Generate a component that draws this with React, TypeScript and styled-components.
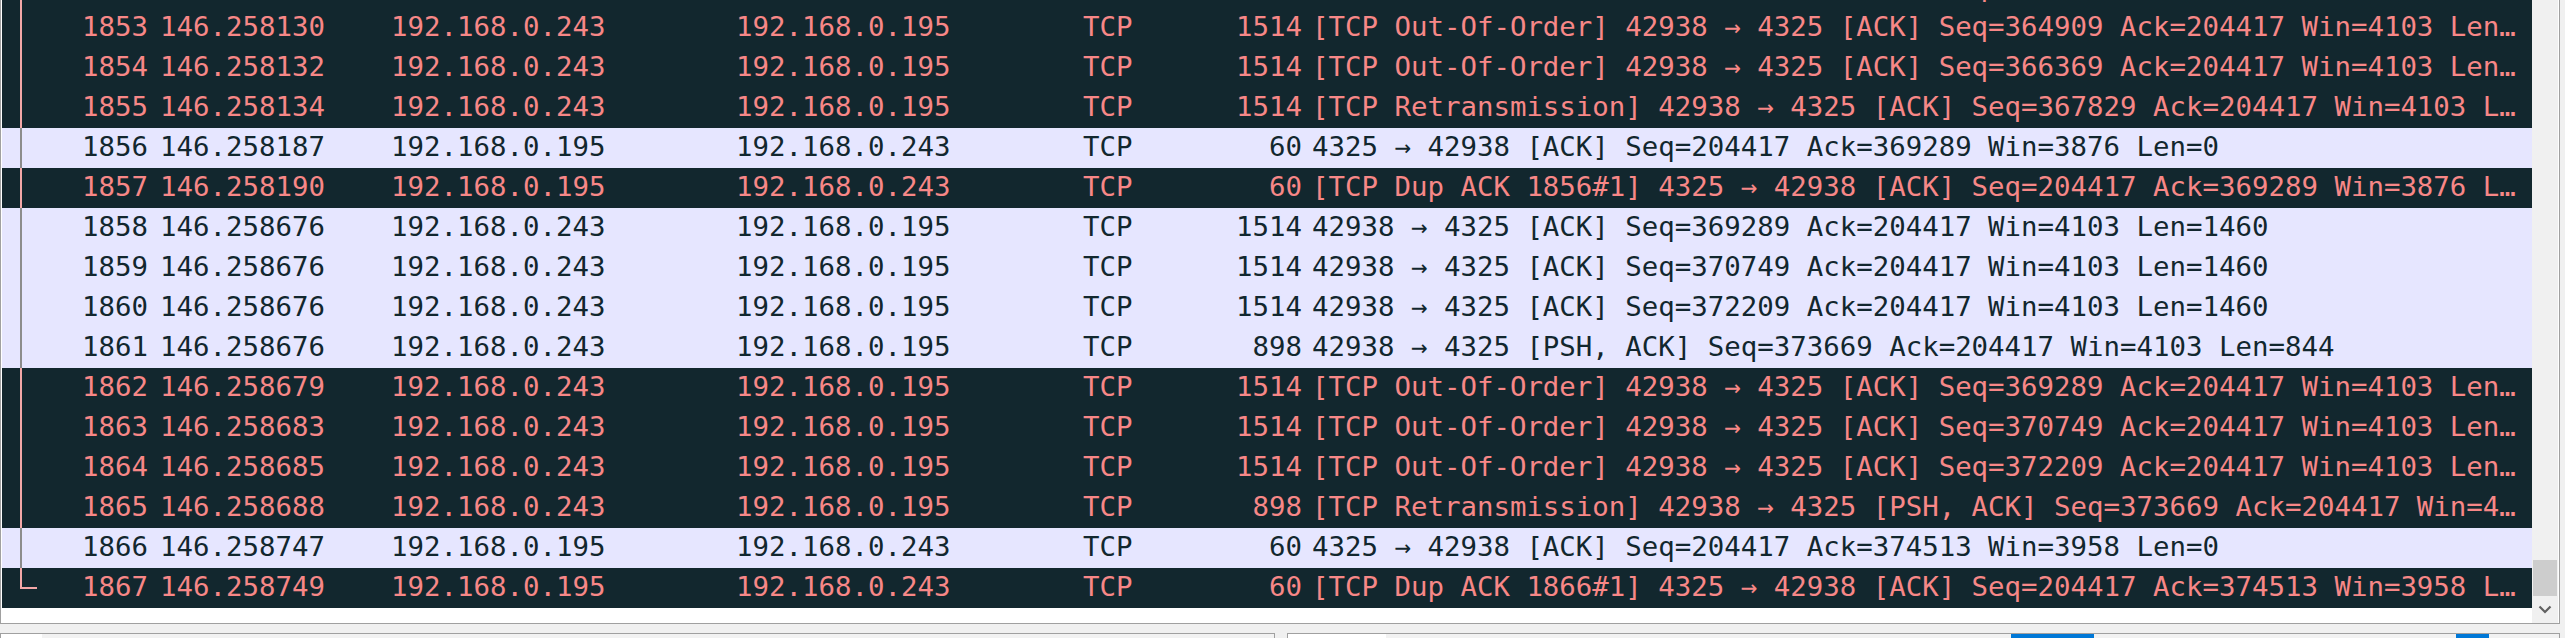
import React from 'react';
import styled, { createGlobalStyle, css } from 'styled-components';

const GlobalStyle = createGlobalStyle`
  html, body {
    margin: 0;
    padding: 0;
    background: #f0f0f0;
    overflow: hidden;
  }
  #root {
    width: 2565px;
    height: 638px;
  }
`;

const MONO = `"DejaVu Sans Mono", "Liberation Mono", monospace`;

const Window = styled.div`
  display: flex;
  flex-direction: column;
  width: 2565px;
  height: 638px;
  overflow: hidden;
  background: #f0f0f0;
  font-family: ${MONO};
  font-size: 27.4px;
`;

const ListPanel = styled.div`
  flex: none;
  display: flex;
  width: 2560px;
  height: 624px;
  box-sizing: border-box;
  border: 1px solid #a0a0a0;
  border-top: none;
  padding: 0 1px;
  background: #ffffff;
`;

const Viewport = styled.div`
  flex: 1;
  min-width: 0;
  overflow: hidden;
`;

const PacketList = styled.div<{ $scroll: number }>`
  display: flex;
  flex-direction: column;
  margin-top: ${(p) => -p.$scroll}px;
`;

const Row = styled.div<{ $bad: boolean }>`
  display: grid;
  grid-template-columns: 40px 110px 231px 345px 347px 75px 156px minmax(0, 1fr);
  height: 40px;
  background: ${(p) => (p.$bad ? '#12272e' : '#e6e6ff')};
  color: ${(p) => (p.$bad ? '#f78787' : '#12272e')};
`;

const Gutter = styled.div<{ $end?: boolean; $bad: boolean }>`
  position: relative;
  --rel: ${(p) => (p.$bad ? '#f3a7a7' : '#8c8c8c')};
  &::before {
    content: '';
    position: absolute;
    left: 18px;
    top: 0;
    width: 2px;
    height: ${(p) => (p.$end ? '21px' : '100%')};
    background: var(--rel);
  }
  ${(p) =>
    p.$end &&
    css`
      &::after {
        content: '';
        position: absolute;
        left: 18px;
        top: 19px;
        width: 17px;
        height: 2px;
        background: var(--rel);
      }
    `}
`;

const Cell = styled.div<{ $align?: 'left' | 'right' }>`
  box-sizing: border-box;
  height: 40px;
  line-height: 37px;
  padding-bottom: 3px;
  overflow: hidden;
  white-space: pre;
  text-overflow: ellipsis;
  text-align: ${(p) => (p.$align === 'right' ? 'right' : 'left')};
  padding-left: ${(p) => (p.$align === 'right' ? '0' : '8px')};
  padding-right: ${(p) => (p.$align === 'right' ? '4px' : '0')};
`;

const InfoCell = styled(Cell)`
  padding-left: 6px;
  padding-right: 10px;
`;

const Scrollbar = styled.div`
  flex: none;
  width: 26px;
  display: flex;
  flex-direction: column;
  background: #f0f0f0;
`;

const Track = styled.div`
  flex: 1;
  display: flex;
  flex-direction: column;
  justify-content: flex-end;
`;

const Thumb = styled.div`
  height: 36px;
  margin: 0 1px;
  background: #cdcdcd;
`;

const ArrowButton = styled.div`
  height: 27px;
  display: flex;
  align-items: center;
  justify-content: center;
  padding-bottom: 1px;
  box-sizing: border-box;
`;

const BottomArea = styled.div`
  flex: none;
  display: flex;
  gap: 12px;
  margin-top: 9px;
  width: 2560px;
`;

const Pane = styled.div<{ $width: number }>`
  flex: none;
  width: ${(p) => p.$width}px;
  height: 80px;
  box-sizing: border-box;
  border: 1px solid #a0a0a0;
  background: #ffffff;
  overflow: hidden;
`;

const TreeRow = styled.div`
  display: flex;
  height: 40px;
  line-height: 40px;
  color: #000000;
`;

const Expander = styled.div`
  width: 41px;
  flex: none;
  background: #ffffff;
`;

const TreeLabel = styled.div`
  flex: 1;
  min-width: 0;
  background: #f2f2f2;
  white-space: pre;
  overflow: hidden;
  padding-top: 10px;
`;

const BytesRow = styled.div`
  display: flex;
  height: 40px;
  line-height: 40px;
  color: #000000;
`;

const Offset = styled.div`
  width: 98px;
  flex: none;
  background: #ffffff;
  padding-left: 6px;
  box-sizing: border-box;
  overflow: hidden;
`;

const HexArea = styled.div`
  flex: 1;
  min-width: 0;
  background: #f2f2f2;
  padding-left: 15px;
  white-space: pre;
  overflow: hidden;
`;

const Highlight = styled.span`
  display: inline-block;
  height: 40px;
  vertical-align: top;
  background: #0078d7;
  color: #ffffff;
`;

type Packet = {
  no: number;
  time: string;
  src: string;
  dst: string;
  proto: string;
  len: number;
  info: string;
  bad: boolean;
};

const H243 = '192.168.0.243';
const H195 = '192.168.0.195';

const packets: Packet[] = [
  { no: 1852, time: '146.258127', src: H243, dst: H195, proto: 'TCP', len: 1514, bad: true,
    info: '[TCP Out-Of-Order] 42938 → 4325 [ACK] Seq=363449 Ack=204417 Win=4103 Len=1460' },
  { no: 1853, time: '146.258130', src: H243, dst: H195, proto: 'TCP', len: 1514, bad: true,
    info: '[TCP Out-Of-Order] 42938 → 4325 [ACK] Seq=364909 Ack=204417 Win=4103 Len=1460' },
  { no: 1854, time: '146.258132', src: H243, dst: H195, proto: 'TCP', len: 1514, bad: true,
    info: '[TCP Out-Of-Order] 42938 → 4325 [ACK] Seq=366369 Ack=204417 Win=4103 Len=1460' },
  { no: 1855, time: '146.258134', src: H243, dst: H195, proto: 'TCP', len: 1514, bad: true,
    info: '[TCP Retransmission] 42938 → 4325 [ACK] Seq=367829 Ack=204417 Win=4103 Len=1460' },
  { no: 1856, time: '146.258187', src: H195, dst: H243, proto: 'TCP', len: 60, bad: false,
    info: '4325 → 42938 [ACK] Seq=204417 Ack=369289 Win=3876 Len=0' },
  { no: 1857, time: '146.258190', src: H195, dst: H243, proto: 'TCP', len: 60, bad: true,
    info: '[TCP Dup ACK 1856#1] 4325 → 42938 [ACK] Seq=204417 Ack=369289 Win=3876 Len=0 SLE=364909 SRE=369289' },
  { no: 1858, time: '146.258676', src: H243, dst: H195, proto: 'TCP', len: 1514, bad: false,
    info: '42938 → 4325 [ACK] Seq=369289 Ack=204417 Win=4103 Len=1460' },
  { no: 1859, time: '146.258676', src: H243, dst: H195, proto: 'TCP', len: 1514, bad: false,
    info: '42938 → 4325 [ACK] Seq=370749 Ack=204417 Win=4103 Len=1460' },
  { no: 1860, time: '146.258676', src: H243, dst: H195, proto: 'TCP', len: 1514, bad: false,
    info: '42938 → 4325 [ACK] Seq=372209 Ack=204417 Win=4103 Len=1460' },
  { no: 1861, time: '146.258676', src: H243, dst: H195, proto: 'TCP', len: 898, bad: false,
    info: '42938 → 4325 [PSH, ACK] Seq=373669 Ack=204417 Win=4103 Len=844' },
  { no: 1862, time: '146.258679', src: H243, dst: H195, proto: 'TCP', len: 1514, bad: true,
    info: '[TCP Out-Of-Order] 42938 → 4325 [ACK] Seq=369289 Ack=204417 Win=4103 Len=1460' },
  { no: 1863, time: '146.258683', src: H243, dst: H195, proto: 'TCP', len: 1514, bad: true,
    info: '[TCP Out-Of-Order] 42938 → 4325 [ACK] Seq=370749 Ack=204417 Win=4103 Len=1460' },
  { no: 1864, time: '146.258685', src: H243, dst: H195, proto: 'TCP', len: 1514, bad: true,
    info: '[TCP Out-Of-Order] 42938 → 4325 [ACK] Seq=372209 Ack=204417 Win=4103 Len=1460' },
  { no: 1865, time: '146.258688', src: H243, dst: H195, proto: 'TCP', len: 898, bad: true,
    info: '[TCP Retransmission] 42938 → 4325 [PSH, ACK] Seq=373669 Ack=204417 Win=4103 Len=844' },
  { no: 1866, time: '146.258747', src: H195, dst: H243, proto: 'TCP', len: 60, bad: false,
    info: '4325 → 42938 [ACK] Seq=204417 Ack=374513 Win=3958 Len=0' },
  { no: 1867, time: '146.258749', src: H195, dst: H243, proto: 'TCP', len: 60, bad: true,
    info: '[TCP Dup ACK 1866#1] 4325 → 42938 [ACK] Seq=204417 Ack=374513 Win=3958 Len=0 SLE=369289 SRE=374513' },
];

const ChevronDown = () => (
  <svg width="14" height="9" viewBox="0 0 14 9" aria-hidden="true">
    <polyline points="1.5,1.5 7,7 12.5,1.5" fill="none" stroke="#606060" strokeWidth="2.2" />
  </svg>
);

export default function App() {
  const last = packets.length - 1;
  return (
    <>
      <GlobalStyle />
      <Window>
        <ListPanel>
          <Viewport>
            <PacketList $scroll={32}>
              {packets.map((p, i) => (
                <Row key={p.no} $bad={p.bad}>
                  <Gutter $bad={p.bad} $end={i === last} />
                  <Cell $align="right">{p.no}</Cell>
                  <Cell>{p.time}</Cell>
                  <Cell>{p.src}</Cell>
                  <Cell>{p.dst}</Cell>
                  <Cell>{p.proto}</Cell>
                  <Cell $align="right">{p.len}</Cell>
                  <InfoCell>{p.info}</InfoCell>
                </Row>
              ))}
            </PacketList>
          </Viewport>
          <Scrollbar>
            <Track>
              <Thumb />
            </Track>
            <ArrowButton>
              <ChevronDown />
            </ArrowButton>
          </Scrollbar>
        </ListPanel>
        <BottomArea>
          <Pane $width={1275}>
            <TreeRow>
              <Expander />
              <TreeLabel>Frame 1867: 60 bytes on wire (480 bits), 60 bytes captured (480 bits)</TreeLabel>
            </TreeRow>
          </Pane>
          <Pane $width={1273}>
            <BytesRow>
              <Offset>0000</Offset>
              <HexArea>
                {'00 e0 4c 68 00 12 2c f0  5d 83 a1 9b '}
                <Highlight>08 00</Highlight>
                {' 45 00   ..Lh..,. ]...'}
                <Highlight>..</Highlight>
                {'E.'}
              </HexArea>
            </BytesRow>
          </Pane>
        </BottomArea>
      </Window>
    </>
  );
}
